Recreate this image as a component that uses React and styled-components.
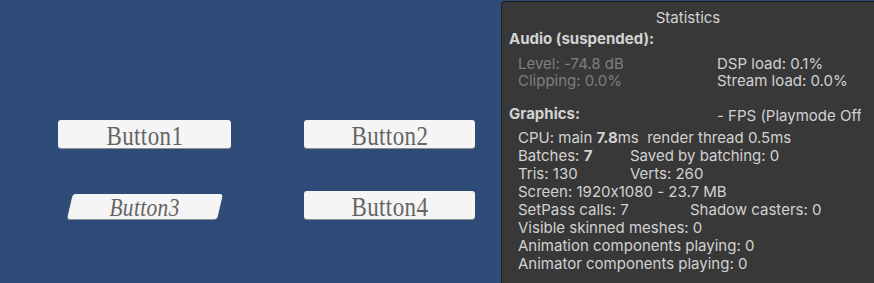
import React from "react";
import styled, { createGlobalStyle } from "styled-components";

const GlobalStyle = createGlobalStyle`
  html, body {
    margin: 0;
    padding: 0;
    background: #2f4c78;
    overflow: hidden;
  }
`;

export default function App() {
  return (
    <>
      <GlobalStyle />
      <Screen>
        <Canvas>
          <ButtonGrid>
            <GameButton>
              <Label>Button1</Label>
            </GameButton>
            <GameButton>
              <Label>Button2</Label>
            </GameButton>
            <SkewButton>
              <Label>Button3</Label>
            </SkewButton>
            <GameButton>
              <Label>Button4</Label>
            </GameButton>
          </ButtonGrid>
        </Canvas>
        <StatsPanel>
          <Title>Statistics</Title>
          <Heading>Audio (suspended):</Heading>
          <AudioTable>
            <Dim>Level: -74.8 dB</Dim>
            <Cell>DSP load: 0.1%</Cell>
            <Dim>Clipping: 0.0%</Dim>
            <Cell>Stream load: 0.0%</Cell>
          </AudioTable>
          <GraphicsHead>
            <Heading as="div">Graphics:</Heading>
            <Fps>- FPS (Playmode Off)</Fps>
          </GraphicsHead>
          <Lines>
            <Line>
              CPU: main <b>7.8</b>ms&nbsp; render thread 0.5ms
            </Line>
            <Line>
              <Col $w={112}>
                Batches: <b>7</b>
              </Col>
              Saved by batching: 0
            </Line>
            <Line>
              <Col $w={112}>Tris: 130</Col>
              Verts: 260
            </Line>
            <Line>Screen: 1920x1080 - 23.7 MB</Line>
            <Line>
              <Col $w={172}>SetPass calls: 7</Col>
              Shadow casters: 0
            </Line>
            <Line>Visible skinned meshes: 0</Line>
            <Line>Animation components playing: 0</Line>
            <Line>Animator components playing: 0</Line>
          </Lines>
        </StatsPanel>
      </Screen>
    </>
  );
}

const Screen = styled.div`
  display: flex;
  width: 874px;
  height: 283px;
  overflow: hidden;
`;

const Canvas = styled.div`
  width: 501px;
  flex-shrink: 0;
`;

const ButtonGrid = styled.div`
  display: grid;
  grid-template-columns: 173px 171px;
  column-gap: 73px;
  row-gap: 43px;
  padding: 120px 0 0 58px;
  align-items: center;
`;

const GameButton = styled.div`
  height: 28px;
  background: #f5f5f5;
  border-radius: 3px;
  box-shadow: 0 1px 0 #8a8f98;
  display: flex;
  align-items: center;
  justify-content: center;
  font-family: "Liberation Serif", "DejaVu Serif", serif;
  font-size: 28px;
  color: #646464;
  line-height: 1;
  padding-top: 3px;
  box-sizing: border-box;
`;

const Label = styled.span`
  display: inline-block;
  transform: scaleX(0.82);
  letter-spacing: 0.5px;
  white-space: nowrap;
`;

const SkewButton = styled(GameButton)`
  justify-self: center;
  width: 150px;
  height: 25px;
  margin-top: 2px;
  transform: skewX(-13deg);
  font-size: 26px;
  ${Label} {
    font-style: italic;
    transform: skewX(13deg) scaleX(0.82);
  }
`;

const StatsPanel = styled.div`
  width: 373px;
  height: 300px;
  margin-top: 1px;
  flex-shrink: 0;
  box-sizing: border-box;
  background: #383838;
  border: 1px solid #1f1f1f;
  border-right: none;
  border-radius: 4px 0 0 0;
  padding: 0 13px 0 7px;
  overflow: hidden;
  font-family: Inter, "Noto Sans", sans-serif;
  font-size: 15px;
  font-feature-settings: "calt" 0;
  color: #d2d2d2;
  white-space: nowrap;
`;

const Title = styled.div`
  text-align: center;
  line-height: 18px;
  margin: 7px 0 3px 6px;
`;

const Heading = styled.div`
  font-weight: 700;
  line-height: 18px;
  margin-top: 2px;
`;

const AudioTable = styled.div`
  display: grid;
  grid-template-columns: 199px auto;
  padding: 7px 0 0 9px;
  line-height: 17px;
`;

const Cell = styled.div`
  color: #d2d2d2;
`;

const Dim = styled.div`
  color: #7f7f7f;
`;

const GraphicsHead = styled.div`
  display: grid;
  grid-template-columns: 208px 1fr;
  margin-top: 14px;
  overflow: hidden;
`;

const Fps = styled.div`
  padding-top: 4px;
  line-height: 18px;
  overflow: hidden;
`;

const Lines = styled.div`
  padding: 4px 0 0 9px;
`;

const Line = styled.div`
  line-height: 18px;
  b {
    font-weight: 700;
  }
`;

const Col = styled.span`
  display: inline-block;
  width: ${(p) => p.$w}px;
`;
